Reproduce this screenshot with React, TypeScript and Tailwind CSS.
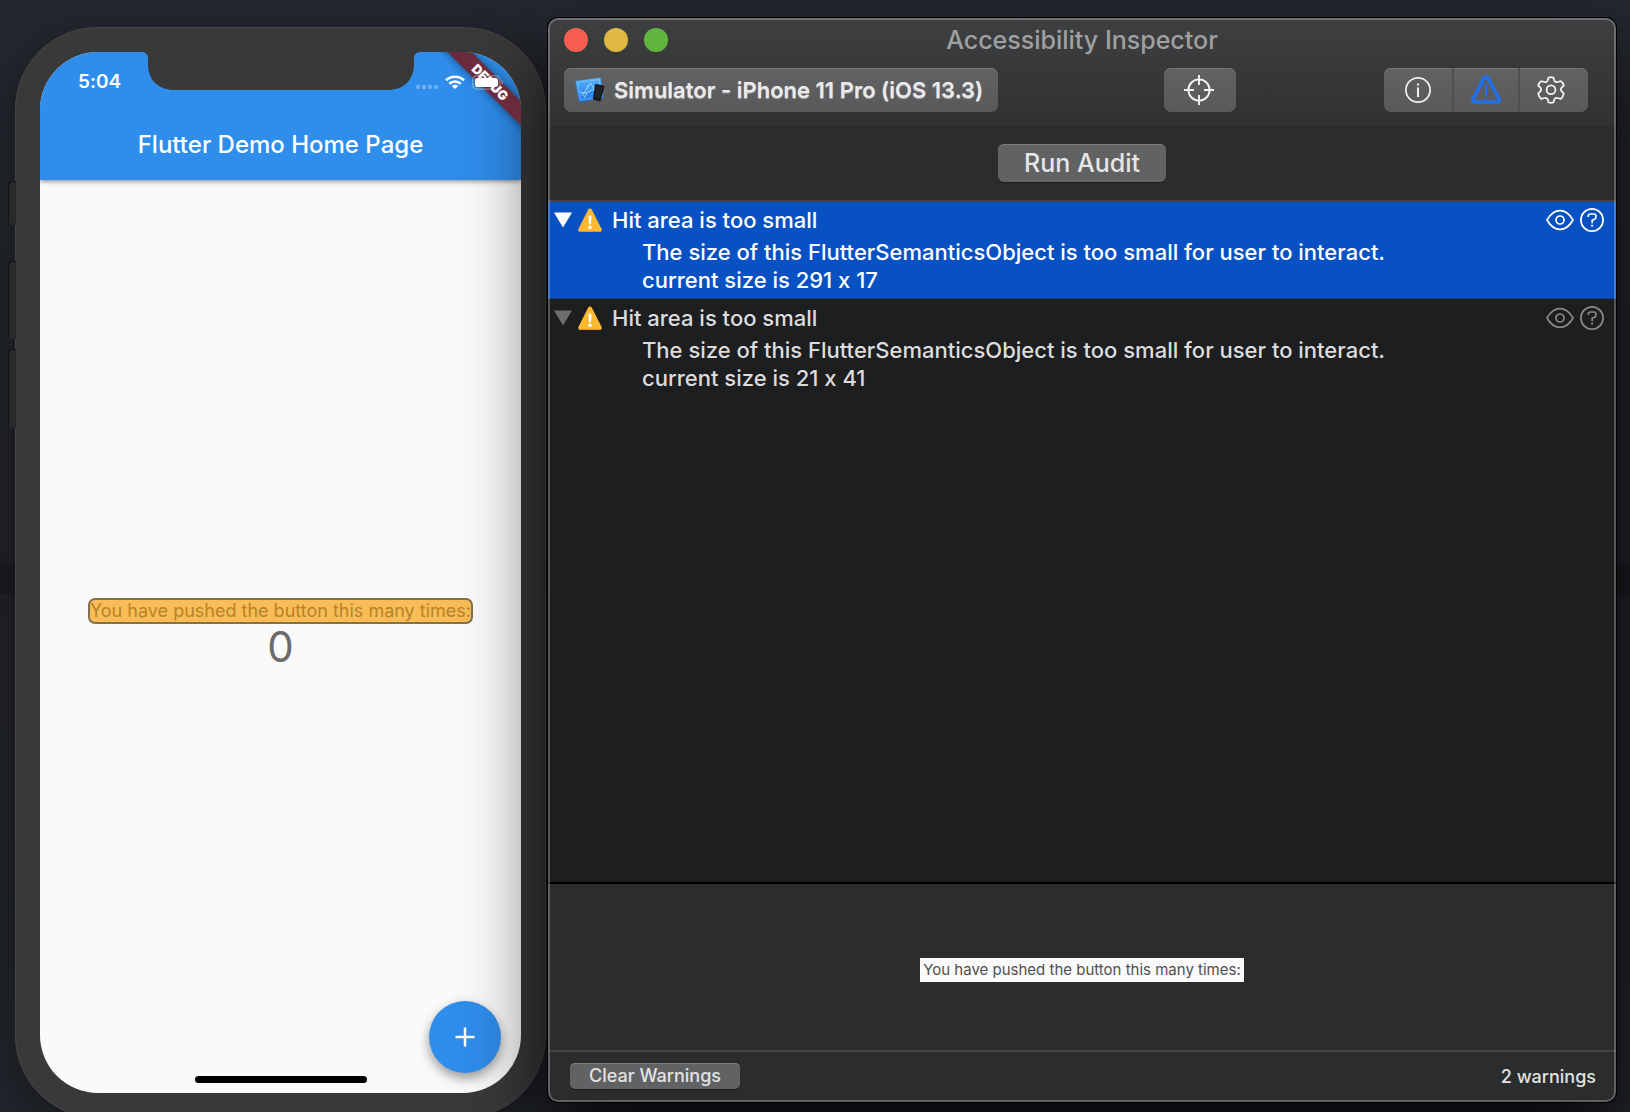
import { ReactNode } from "react";

function WarningBadge() {
  return (
    <svg viewBox="0 0 24 24" className="size-6 shrink-0" aria-hidden="true">
      <path d="M12 .6c.9 0 1.5.4 1.9 1.2l9.6 19c.7 1.5-.1 3-1.6 3H2.100c-1.500 0-2.300-1.500-1.600-3l9.600-19c.4-.8 1-1.200 1.900-1.200Z" fill="#fdb932" />
      <path d="M1 23.500h22" stroke="#e98f2c" strokeWidth="1" />
      <path d="M10.400 7.800h3.200l-.6 8.400h-2z" fill="#fff" />
      <circle cx="12" cy="19.300" r="1.700" fill="#fff" />
    </svg>
  );
}

function Eye() {
  return (
    <svg viewBox="0 0 28 22" className="h-[22px] w-7" fill="none" stroke="currentColor" strokeWidth="1.700" aria-hidden="true">
      <path d="M1 11C4.500 4.800 8.800 1.600 14 1.600S23.500 4.800 27 11c-3.500 6.200-7.800 9.400-13 9.400S4.500 17.200 1 11Z" />
      <circle cx="14" cy="11" r="4" />
    </svg>
  );
}

function Help() {
  return (
    <svg viewBox="0 0 24 24" className="size-6" fill="none" stroke="currentColor" strokeWidth="1.700" aria-hidden="true">
      <circle cx="12" cy="12" r="11.100" />
      <path d="M8.300 9V7.900c0-1.300.8-1.900 2-1.900h3.600c1.300 0 2 .7 2 1.900v1.300c0 1.100-.5 1.600-1.500 2.100l-2.200 1v3" />
      <path d="M12.100 16.700v1.700" strokeWidth="2" />
    </svg>
  );
}

function SimulatorIcon() {
  return (
    <svg viewBox="0 0 30 28" className="h-7 w-[30px] shrink-0" aria-hidden="true">
      <defs>
        <linearGradient id="simBlue" x1="0" y1="0" x2="0" y2="1">
          <stop offset="0" stopColor="#58b4f6" />
          <stop offset="1" stopColor="#1a74f0" />
        </linearGradient>
      </defs>
      <path d="M.5 5 25.500 1.500 28.500 22 3.800 26Z" fill="url(#simBlue)" />
      <path d="M2.500 6.600 24 3.500l2.500 17L5.500 24Z" fill="none" stroke="#9ed6ff" strokeWidth=".7" strokeOpacity=".7" />
      <path d="m7 20 8.500-13 5 8M5 16.500l6 .5 8-4M9 22l3-5M13 9l-1 4" fill="none" stroke="#a9dcff" strokeWidth=".9" />
      <path d="m21 8 7.500 1.500c.7.100 1 .6.800 1.300l-3.600 13.700c-.2.700-.7 1-1.400.800l-5.500-1.600c-.7-.2-1-.7-.8-1.400L20 9c.2-.7.500-1.100 1-1Z" fill="#16181b" />
      <path d="m21.500 9.800 6.300 1.300-3 11.600-5.500-1.600Z" fill="#222428" />
    </svg>
  );
}

function Crosshair() {
  return (
    <svg viewBox="0 0 30 30" className="size-[30px]" fill="none" stroke="currentColor" strokeWidth="1.900" aria-hidden="true">
      <circle cx="15" cy="15" r="10.600" />
      <path d="M15 0v10M15 20v10M0 15h10M20 15h10" />
    </svg>
  );
}

function Info() {
  return (
    <svg viewBox="0 0 26 26" className="size-[26px]" fill="none" stroke="currentColor" strokeWidth="1.700" aria-hidden="true">
      <circle cx="13" cy="13" r="12.100" />
      <path d="M13 10.500v9.500M13 6.400v2" strokeWidth="2" />
    </svg>
  );
}

function Triangle() {
  return (
    <svg viewBox="0 0 30 30" className="size-[30px]" fill="none" stroke="currentColor" aria-hidden="true">
      <path d="M13 3.200c.9-1.600 3.100-1.600 4 0l10.800 20.500c.9 1.700-.1 3.500-2 3.500H4.200c-1.900 0-2.900-1.800-2-3.500Z" strokeWidth="3.800" strokeLinejoin="round" />
      <path d="M15 9v11.500M15 22v2" strokeWidth="2" />
    </svg>
  );
}

function Gear() {
  return (
    <svg viewBox="0 0 28 28" className="size-7" fill="none" stroke="currentColor" strokeWidth="1.800" strokeLinejoin="round" aria-hidden="true">
      <path d="M11.600 1.600q2.400-.8 4.800 0l.9 3q.4.900 1.400 1.300t1.900.1l3.300-.9q2.200 1.700 2.900 4.300l-2.300 2.400q-1.300 1.700 0 3.400l2.300 2.400q-.8 3.600-2.900 5.300l-3.300-.9q-1-.3-1.900.1t-1.400 1.300l-.9 3q-2.400.8-4.800 0l-.9-3q-.4-.9-1.400-1.300t-1.900-.1l-3.300.9q-2.100-1.700-2.900-5.300l2.300-2.400q1.300-1.700 0-3.400L1.200 9.400q.7-2.600 2.900-4.300l3.300.9q1 .3 1.900-.1t1.400-1.300Z" />
      <circle cx="14" cy="13.800" r="4.400" />
    </svg>
  );
}

function StatusIcons() {
  return (
    <div className="flex items-center gap-[7px]">
      <svg viewBox="0 0 22 4" className="mt-[9px] h-1 w-[22px]" fill="#fff" fillOpacity=".3" aria-hidden="true">
        <rect width="4" height="4" rx="1" />
        <rect x="6" width="4" height="4" rx="1" />
        <rect x="12" width="4" height="4" rx="1" />
        <rect x="18" width="4" height="4" rx="1" />
      </svg>
      <svg viewBox="0 0 20 14" className="h-[14px] w-5" fill="none" stroke="#fff" strokeWidth="2.600" aria-hidden="true">
        <path d="M1 5.300a13 13 0 0 1 18 0M4.300 8.800a8.300 8.300 0 0 1 11.400 0" />
        <path d="M10 14 6.700 10.900a4.900 4.900 0 0 1 6.600 0Z" fill="#fff" stroke="none" />
      </svg>
      <svg viewBox="0 0 32 15" className="h-[15px] w-8" aria-hidden="true">
        <rect x=".8" y=".8" width="27" height="13.400" rx="4" fill="none" stroke="#fff" strokeOpacity=".35" strokeWidth="1.300" />
        <rect x="3" y="3" width="23" height="9" rx="2" fill="#fff" />
        <path d="M29.500 5v5c1-.4 1.700-1.300 1.700-2.500S30.500 5.400 29.500 5Z" fill="#fff" fillOpacity=".35" />
      </svg>
    </div>
  );
}

function Phone() {
  return (
    <section aria-label="iPhone simulator" className="relative mt-[27px] -mb-[6px] w-[531px] shrink-0">
      <span className="absolute top-[154px] -left-[7px] z-10 h-11 w-2 rounded-l bg-[#28292a] shadow-[inset_1px_1px_0_#111]" />
      <span className="absolute top-[234px] -left-[7px] z-10 h-[78px] w-2 rounded-l bg-[#28292a] shadow-[inset_1px_1px_0_#111]" />
      <span className="absolute top-[322px] -left-[7px] z-10 h-[79px] w-2 rounded-l bg-[#28292a] shadow-[inset_1px_1px_0_#111]" />
      <div className="flex h-full rounded-[82px] border border-[#444547] bg-[#393939] px-6 py-6 shadow-[0_10px_40px_rgba(0,0,0,0.4)]">
        <div className="relative flex flex-1 flex-col overflow-hidden rounded-[58px] bg-[#fafafa]">
          <header className="bg-[#2f8deb] pb-5 text-white shadow-[0_1px_5px_rgba(0,0,0,0.5)]">
            <div className="flex h-[60px] items-center justify-between pr-[17px] pl-[38px]">
              <time className="text-[19px] font-semibold">5:04</time>
              <div className="relative z-20">
                <StatusIcons />
              </div>
            </div>
            <h1 className="mt-[18px] text-center text-[24px] leading-[30px] font-medium">Flutter Demo Home Page</h1>
          </header>
          <svg viewBox="0 0 280 38" className="absolute top-0 left-1/2 h-[38px] w-[280px] -translate-x-1/2" fill="#393939" aria-hidden="true">
            <path d="M0 0c5 0 7 2 7 7v5c0 16 10 26 27 26h212c17 0 27-10 27-26V7c0-5 2-7 7-7Z" />
          </svg>
          <div className="absolute top-[22px] -right-[39px] z-10 flex h-[17px] w-[140px] rotate-45 items-center justify-center bg-[#6c2b3c] text-[13px] font-black text-white shadow-[0_0_8px_rgba(0,0,0,0.5)]">
            DEBUG
          </div>
          <main className="flex flex-1 flex-col items-center justify-center pb-1.5">
            <p className="rounded-[7px] border-2 border-[#83714c] bg-[#f8bd56] text-[18px] leading-[22px] text-[#b9822a]">
              You have pushed the button this many times:
            </p>
            <output className="text-[42px] leading-[46px] text-[#6b6b6b]">0</output>
          </main>
          <button aria-label="Increment" className="absolute right-5 bottom-5 flex size-[72px] items-center justify-center rounded-full bg-[#2f8deb] text-white shadow-[0_5px_12px_rgba(0,0,0,0.4)]">
            <svg viewBox="0 0 20 20" className="size-5" stroke="currentColor" strokeWidth="2.500" aria-hidden="true">
              <path d="M10 .5v19M.5 10h19" />
            </svg>
          </button>
          <span className="absolute bottom-[10px] left-1/2 h-[7px] w-[172px] -translate-x-1/2 rounded-full bg-black" />
        </div>
      </div>
    </section>
  );
}

function ToolButton({ label, children, className }: { label: string; children: ReactNode; className: string }) {
  return (
    <button aria-label={label} className={`flex h-11 items-center justify-center bg-linear-to-b from-[#616264] to-[#59595b] shadow-[inset_0_1px_0_#757678] ${className}`}>
      {children}
    </button>
  );
}

function Warning({ size, selected }: { size: string; selected?: boolean }) {
  return (
    <li className={selected ? "mb-px h-[97px] border-b border-[#153f7d] bg-[#0851c3] px-1.5 text-white" : "h-[97px] px-1.5 text-[#dcdcdd]"}>
      <div className="flex h-9 items-center">
        <button aria-label="Collapse" className={selected ? "text-white" : "text-[#6d6d6e]"}>
          <svg viewBox="0 0 18 16" className="h-4 w-[18px]" fill="currentColor" aria-hidden="true">
            <path d="M0 .5h18L9 15.500Z" />
          </svg>
        </button>
        <span className="ml-[6px]">
          <WarningBadge />
        </span>
        <h2 className="ml-[10px] flex-1 text-[22px] font-medium">Hit area is too small</h2>
        <div className={selected ? "mr-1.5 flex items-center gap-[6px]" : "mr-1.5 flex items-center gap-[6px] text-[#88888a]"}>
          <button aria-label="Preview">
            <Eye />
          </button>
          <button aria-label="Help">
            <Help />
          </button>
        </div>
      </div>
      <p className="pl-[88px] text-[22px] leading-7 font-medium">
        The size of this FlutterSemanticsObject is too small for user to interact.
        <br />
        current size is {size}
      </p>
    </li>
  );
}

function Inspector() {
  return (
    <section aria-label="Accessibility Inspector" className="relative mt-[18px] mr-[14px] mb-[10px] ml-[2px] flex min-w-0 flex-1 flex-col overflow-hidden rounded-[10px] bg-[#1d1e20] shadow-[0_0_0_1px_#000,0_40px_80px_rgba(0,0,0,0.8)]">
      <header className="h-[108px] bg-linear-to-b from-[#3e3f41] to-[#303133]">
        <div className="relative flex h-[46px] items-center justify-center">
          <div className="absolute top-[10px] left-4 flex gap-4">
            <button aria-label="Close" className="size-6 rounded-full bg-[#f45d50]" />
            <button aria-label="Minimize" className="size-6 rounded-full bg-[#dfb743]" />
            <button aria-label="Zoom" className="size-6 rounded-full bg-[#61b63f]" />
          </div>
          <h1 className="text-[25px] font-medium text-[#a0a0a1]">Accessibility Inspector</h1>
        </div>
        <div className="mt-1 flex pr-7 pl-4">
          <button className="flex h-11 w-[434px] items-center gap-[9px] rounded-[7px] bg-linear-to-b from-[#616264] to-[#59595b] pl-[11px] text-[22px] font-semibold whitespace-nowrap text-[#ebebeb] shadow-[inset_0_1px_0_#757678] text-shadow-[0_1px_1px_#aaa]">
            <SimulatorIcon />
            Simulator - iPhone 11 Pro (iOS 13.3)
          </button>
          <ToolButton label="Point to inspect" className="mr-[148px] ml-auto w-[72px] rounded-[7px] pr-[2px] text-[#f2f2f2]">
            <Crosshair />
          </ToolButton>
          <div className="flex justify-end text-[#f2f2f2]">
            <ToolButton label="Inspection" className="w-[70px] rounded-l-[7px] border-r-2 border-[#505053]">
              <Info />
            </ToolButton>
            <ToolButton label="Audit" className="w-[66px] border-r-2 border-[#505053] text-[#236fe6]">
              <Triangle />
            </ToolButton>
            <ToolButton label="Settings" className="w-[68px] rounded-r-[7px] pr-[6px]">
              <Gear />
            </ToolButton>
          </div>
        </div>
      </header>
      <div className="flex h-[76px] items-center justify-center border-b-2 border-[#434345] bg-[#2b2c2e]">
        <button className="h-[38px] rounded-md bg-[#616264] px-[26px] text-[25px] leading-[38px] font-medium text-[#e6e6e6] shadow-[inset_0_1px_0_#7b7c7e,0_1px_1px_rgba(0,0,0,0.4)]">Run Audit</button>
      </div>
      <ul className="flex-1">
        <Warning size="291 x 17" selected />
        <Warning size="21 x 41" />
      </ul>
      <div className="flex h-[168px] items-center justify-center border-t-2 border-black bg-[#2c2c2c] pt-1.5">
        <p className="bg-[#fafafa] px-[3px] text-[15px] leading-6 text-[#505050]">You have pushed the button this many times:</p>
      </div>
      <footer className="flex h-[52px] items-center justify-between border-t-2 border-[#434345] bg-[#2b2c2e] pr-5 pb-[2px] pl-[22px] font-medium text-[#e2e2e3]">
        <button className="h-[26px] rounded-[5px] bg-[#616264] px-[19px] text-[18px] leading-[26px] shadow-[inset_0_1px_0_#7b7c7e,0_1px_1px_rgba(0,0,0,0.4)]">Clear Warnings</button>
        <output className="text-[18px]">2 warnings</output>
      </footer>
      <span className="pointer-events-none absolute inset-0 rounded-[10px] border-2 border-white/25" />
    </section>
  );
}

export default function App() {
  return (
    <div className="flex h-screen min-h-[700px] overflow-hidden bg-[linear-gradient(180deg,#24272e_0%,#202229_50.7%,#1b1c20_50.7%,#1b1c20_53.4%,#202229_53.4%,#22252c_100%)] pl-[15px] font-['Inter',sans-serif] [font-feature-settings:'calt'_0]">
      <Phone />
      <Inspector />
    </div>
  );
}
